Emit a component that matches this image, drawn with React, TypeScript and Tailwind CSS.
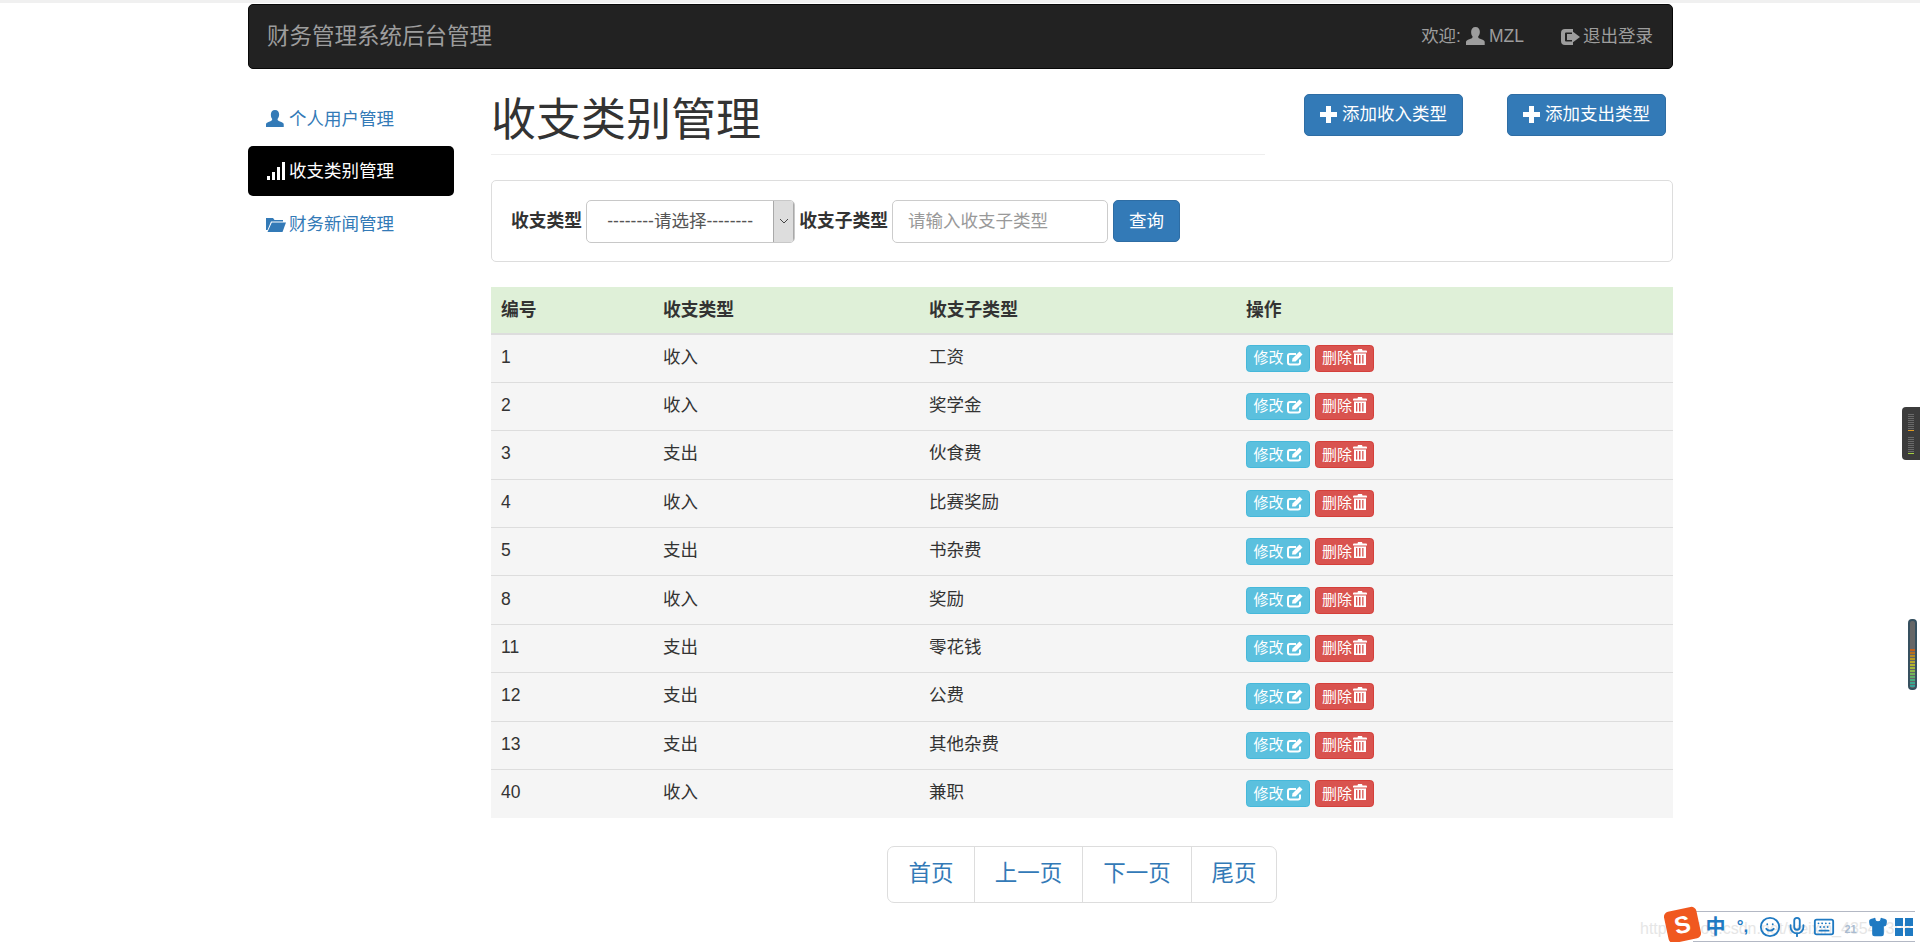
import { Keyboard, Mic, Shirt, Smile } from "lucide-react";

const rows = [
  { id: 1, type: "收入", sub: "工资" },
  { id: 2, type: "收入", sub: "奖学金" },
  { id: 3, type: "支出", sub: "伙食费" },
  { id: 4, type: "收入", sub: "比赛奖励" },
  { id: 5, type: "支出", sub: "书杂费" },
  { id: 8, type: "收入", sub: "奖励" },
  { id: 11, type: "支出", sub: "零花钱" },
  { id: 12, type: "支出", sub: "公费" },
  { id: 13, type: "支出", sub: "其他杂费" },
  { id: 40, type: "收入", sub: "兼职" },
];

const pages = [
  { label: "首页", width: "w-[86px]" },
  { label: "上一页", width: "w-[108px]" },
  { label: "下一页", width: "w-[109px]" },
  { label: "尾页", width: "w-[85px]" },
];

const meterColors = [
  "#c0601c", "#b8701e", "#b88a20", "#b89a22", "#b8a828", "#b4b42c", "#a4b838",
  "#8cb84a", "#74b45a", "#5cb068", "#48aa80", "#3aa890", "#35a59a",
];

function UserIcon({ className }: { className?: string }) {
  return (
    <svg viewBox="0 0 20 20" className={className} fill="currentColor">
      <path d="M10 0c3 0 4.600 2.200 4.600 5 0 2-.7 3.800-1.800 5 0 1 .4 1.700 1.400 2.100l3.400 1.400c1.200.5 2.100 1.200 2.100 2.500V19H0v-3c0-1.300.9-2 2.100-2.500l3.400-1.400c1-.4 1.400-1.100 1.400-2.100C5.800 8.800 5.400 7 5.400 5 5.400 2.200 7 0 10 0z" />
    </svg>
  );
}

function SignalIcon() {
  return (
    <svg viewBox="0 0 18 18" className="h-[18px] w-[18px]" fill="currentColor">
      <rect x="0" y="14" width="3" height="4" />
      <rect x="5" y="10" width="3" height="8" />
      <rect x="10" y="5" width="3" height="13" />
      <rect x="15" y="0" width="3" height="18" />
    </svg>
  );
}

function FolderIcon() {
  return (
    <svg viewBox="0 0 20 16" className="h-[16px] w-[20px]" fill="currentColor">
      <path d="M0 2h7l1.500 2H17v1.500H5L1.500 14 0 14z" />
      <path d="M5.800 6.500H20L16.500 16H1.500z" />
    </svg>
  );
}

function LogoutIcon() {
  return (
    <svg viewBox="0 0 20 18" className="h-[18px] w-[20px]" fill="currentColor">
      <path d="M4 1h8v3.500H5a1 1 0 0 0-1 1v7a1 1 0 0 0 1 1h7V17H4a4 4 0 0 1-4-4V5a4 4 0 0 1 4-4z" />
      <path d="M11 5.500V3l8 6-8 6v-3H6V6h5z" />
    </svg>
  );
}

function PlusIcon() {
  return (
    <svg viewBox="0 0 17 17" className="h-[17px] w-[17px]" fill="currentColor">
      <path d="M6 0h5v6h6v5h-6v6H6v-6H0V6h6z" />
    </svg>
  );
}

function EditIcon() {
  return (
    <svg viewBox="0 0 16 15" className="h-[15px] w-[16px]" fill="none">
      <path d="M13 8.500V11.500a2 2 0 0 1-2 2H3a2 2 0 0 1-2-2V5a2 2 0 0 1 2-2h6" stroke="currentColor" strokeWidth="2" />
      <path d="M5 10.500 5.500 7.500 12.500.5l3 3-7 7z" fill="currentColor" />
    </svg>
  );
}

function TrashIcon() {
  return (
    <svg viewBox="0 0 14 16" className="mb-[3px] h-[16px] w-[14px]" fill="currentColor">
      <path d="M5 0h4l.5 1.500H13a1 1 0 0 1 1 1V3.500H0V2.500a1 1 0 0 1 1-1h3.500z" />
      <path d="M1 4.500h12V16H1zM3 6v8.500h1.300V6zm3 0v8.500h1.500V6zm3.200 0v8.500h1.300V6z" fillRule="evenodd" />
    </svg>
  );
}

function Navbar() {
  return (
    <div className="flex h-[65px] items-center justify-between rounded-[5px] border border-[#080808] bg-[#222222] pr-[19px] pl-[18px] text-[#9d9d9d]">
      <span className="text-[22.500px]">财务管理系统后台管理</span>
      <div className="flex items-center text-[17.500px]">
        <span>欢迎:</span>
        <UserIcon className="mr-[4px] ml-[5px] h-[19px] w-[19px]" />
        <span>MZL</span>
        <span className="ml-[37px] flex items-center gap-[2px]">
          <LogoutIcon />
          退出登录
        </span>
      </div>
    </div>
  );
}

function Sidebar() {
  return (
    <div className="mt-[24px] flex w-[206px] shrink-0 flex-col gap-[3px] text-[17.500px] text-[#337ab7]">
      <div className="flex h-[50px] items-center gap-[5px] pt-[2px] pl-[18px]">
        <UserIcon className="h-[18px] w-[18px]" />
        个人用户管理
      </div>
      <div className="flex h-[50px] items-center gap-[4px] rounded-[5px] bg-black pl-[19px] text-white">
        <SignalIcon />
        收支类别管理
      </div>
      <div className="flex h-[50px] items-center pl-[18px]">
        <FolderIcon />
        <span className="ml-[3px]">财务新闻管理</span>
      </div>
    </div>
  );
}

function AddButton({ label, className }: { label: string; className: string }) {
  return (
    <button className={`flex h-[42px] w-[159px] items-center justify-center gap-[5px] rounded-[5px] border border-[#2e6da4] bg-[#337ab7] pb-[2px] text-[17.500px] text-white ${className}`}>
      <PlusIcon />
      {label}
    </button>
  );
}

function SearchPanel() {
  return (
    <div className="mt-[25px] flex h-[82px] items-center rounded-[5px] border border-[#dddddd] pl-[19px] text-[17.500px]">
      <span className="text-[17.800px] font-bold">收支类型</span>
      <div className="ml-[4px] flex h-[43px] w-[209px] items-center overflow-hidden rounded-[5px] border border-[#c8c8c8] text-[#555555]">
        <span className="flex-1 text-center">--------请选择--------</span>
        <span className="flex h-full w-[21px] items-center justify-center border-x border-[#a9a9a9] bg-[#dddddd]">
          <svg viewBox="0 0 10 6" className="h-[6px] w-[10px]" fill="none" stroke="#444444">
            <path d="M1 1l4 4 4-4" />
          </svg>
        </span>
      </div>
      <span className="ml-[4px] text-[17.800px] font-bold">收支子类型</span>
      <div className="ml-[4px] flex h-[43px] w-[216px] items-center rounded-[5px] border border-[#cccccc] pl-[15px] text-[#999999]">
        请输入收支子类型
      </div>
      <button className="ml-[5px] h-[42px] w-[67px] rounded-[5px] border border-[#2e6da4] bg-[#337ab7] text-white">
        查询
      </button>
    </div>
  );
}

function DataTable() {
  return (
    <table className="mt-[25px] w-full table-fixed border-collapse text-[17.500px]">
      <thead>
        <tr className="h-[47px] border-b-2 border-[#dddddd] bg-[#dff0d8] text-left text-[17.800px]">
          <th className="w-[162px] pl-[10px]">编号</th>
          <th className="w-[266px] pl-[10px]">收支类型</th>
          <th className="w-[317px] pl-[10px]">收支子类型</th>
          <th className="pl-[10px]">操作</th>
        </tr>
      </thead>
      <tbody>
        {rows.map((row, i) => (
          <tr key={row.id} className={`h-[48.400px] bg-[#f5f5f5] ${i < rows.length - 1 ? "border-b border-[#dddddd]" : ""}`}>
            <td className="pb-[3px] pl-[10px]">{row.id}</td>
            <td className="pb-[3px] pl-[10px]">{row.type}</td>
            <td className="pb-[3px] pl-[10px]">{row.sub}</td>
            <td className="pl-[10px]">
              <div className="flex gap-[5px] text-[15px] text-white">
                <span className="flex h-[27px] w-[64px] items-center justify-center gap-[3px] rounded-[3.750px] border border-[#46b8da] bg-[#5bc0de]">
                  修改
                  <EditIcon />
                </span>
                <span className="flex h-[27px] w-[59px] items-center justify-center gap-[1px] rounded-[3.750px] border border-[#d43f3a] bg-[#d9534f]">
                  删除
                  <TrashIcon />
                </span>
              </div>
            </td>
          </tr>
        ))}
      </tbody>
    </table>
  );
}

function Pagination() {
  return (
    <div className="mt-[28px] flex justify-center">
      <div className="flex h-[57px] overflow-hidden rounded-[7px] border border-[#dddddd] text-[22.500px] text-[#337ab7]">
        {pages.map((page, i) => (
          <span key={page.label} className={`flex items-center justify-center pb-[2px] ${page.width} ${i > 0 ? "border-l border-[#dddddd]" : ""}`}>
            {page.label}
          </span>
        ))}
      </div>
    </div>
  );
}

// desktop widgets captured over the page
function DesktopOverlays() {
  return (
    <>
      <div className="absolute top-[407px] right-0 flex h-[53px] w-[18px] flex-col items-center gap-[1px] rounded-l-[4px] bg-[#3c3c3c] pt-[7px]">
        {[0, 1, 2, 3, 4, 5, 6, 7].map((n) => (
          <div key={n} className="h-[1px] w-[6px] bg-[#6a6a6a]" />
        ))}
        <div className="h-[1px] w-[6px] bg-[#e09a20]" />
        <div className="h-[4px]" />
        {[0, 1, 2, 3, 4, 5, 6, 7].map((n) => (
          <div key={n} className="h-[1px] w-[6px] bg-[#6a6a6a]" />
        ))}
        <div className="h-[1px] w-[6px] bg-[#a4d040]" />
      </div>
      <div className="absolute top-[619px] right-[3px] flex h-[71px] w-[9px] flex-col justify-end gap-[1px] overflow-hidden rounded-[4px] border-2 border-[#36505f] bg-[#666666] pb-[1px]">
        {meterColors.map((color) => (
          <div key={color} className="h-[2px]" style={{ backgroundColor: color }} />
        ))}
      </div>
      <span className="absolute top-[917px] left-[1640px] text-[16px] whitespace-nowrap text-[#e6e6e6]">
        https://blog.csdn.net/weixin_43548398
      </span>
      <div className="absolute top-[911px] left-[1693px] flex h-[31px] w-[222px] items-center border-y border-[#b3b8c4] pl-[9px] text-[#1f7ac2]">
        <span className="w-[27px] text-center text-[20px] leading-none font-bold">中</span>
        <span className="w-[27px] text-center text-[17px] leading-none font-bold">°,</span>
        <span className="flex w-[27px] justify-center">
          <Smile className="h-[22px] w-[22px]" />
        </span>
        <span className="flex w-[27px] justify-center">
          <Mic className="h-[22px] w-[22px]" />
        </span>
        <span className="flex w-[27px] justify-center">
          <Keyboard className="h-[22px] w-[22px]" />
        </span>
        <span className="w-[27px] pt-[6px] text-center text-[11px] leading-none font-bold text-[#a9bbd0]">21</span>
        <span className="flex w-[27px] justify-center">
          <Shirt className="h-[20px] w-[20px]" fill="currentColor" />
        </span>
        <span className="ml-[4px] grid h-[18px] w-[18px] grid-cols-2 gap-[2px]">
          <span className="bg-[#1f7ac2]" />
          <span className="bg-[#1f7ac2]" />
          <span className="bg-[#1f7ac2]" />
          <span className="bg-[#1f7ac2]" />
        </span>
      </div>
      <div className="absolute top-[909px] left-[1666px] flex h-[32px] w-[33px] -rotate-12 items-center justify-center rounded-[5px] bg-[#f0581f] text-[24px] leading-none font-bold text-white">
        S
      </div>
    </>
  );
}

export default function App() {
  return (
    <div className="relative h-[942px] w-[1920px] overflow-hidden bg-white font-['Liberation_Sans','Noto_Sans_CJK_SC',sans-serif] text-[#333333]">
      <div className="h-[3px] bg-[#f0f0f0]" />
      <div className="ml-[248px] w-[1425px] pt-[1px]">
        <Navbar />
        <div className="flex">
          <Sidebar />
          <div className="ml-[37px] flex-1 pt-[25px]">
            <div className="flex items-start">
              <h1 className="h-[61px] w-[774px] border-b border-[#eeeeee] text-[45px] leading-[54px]">
                收支类别管理
              </h1>
              <AddButton label="添加收入类型" className="ml-[39px]" />
              <AddButton label="添加支出类型" className="ml-[44px]" />
            </div>
            <SearchPanel />
            <DataTable />
            <Pagination />
          </div>
        </div>
      </div>
      <DesktopOverlays />
    </div>
  );
}
